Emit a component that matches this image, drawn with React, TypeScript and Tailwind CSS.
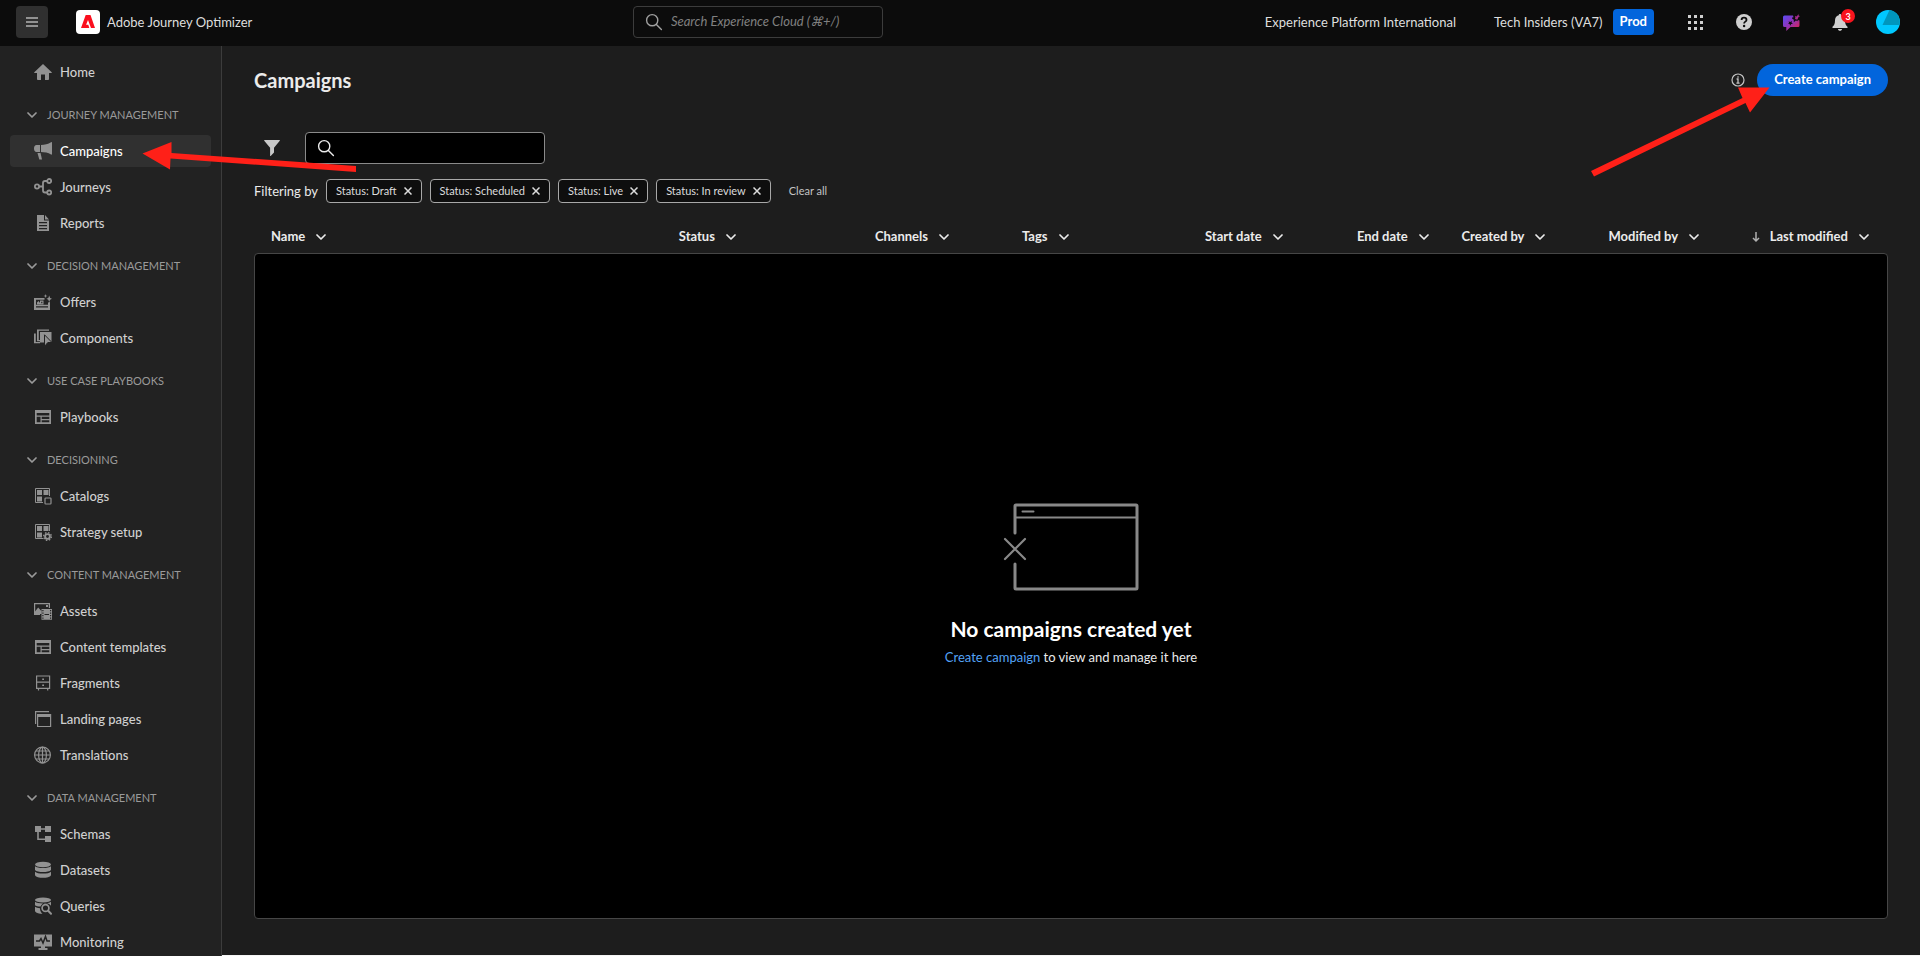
import type { ReactNode } from "react";

function Icon({ children, className = "size-[18px]" }: { children: ReactNode; className?: string }) {
  return (
    <svg viewBox="0 0 18 18" fill="currentColor" aria-hidden="true" className={`shrink-0 ${className}`}>
      {children}
    </svg>
  );
}

function Chevron() {
  return (
    <svg viewBox="0 0 10 10" fill="none" stroke="currentColor" strokeWidth="1.7" strokeLinecap="round" strokeLinejoin="round" aria-hidden="true" className="size-[10px] shrink-0">
      <path d="M1 3l4 4 4-4" />
    </svg>
  );
}

function SearchIcon() {
  return (
    <Icon>
      <g fill="none" stroke="currentColor" strokeWidth="1.4" strokeLinecap="round">
        <circle cx="7.2" cy="7.2" r="5.6" />
        <path d="M11.4 11.4l5 5" />
      </g>
    </Icon>
  );
}

const line = { fill: "none", stroke: "currentColor" };

const icons: Record<string, ReactNode> = {
  Home: <path d="M9 1L.3 9.2c-.3.4-.1.8.4.8H3v6c0 .6.3 1 .8 1H7v-5.500h4V17h3.200c.5 0 .8-.4.8-1v-6h2.300c.5 0 .7-.4.4-.8z" />,
  Campaigns: (
    <>
      <path d="M6 3v7H2.500C1 10 0 8.600 0 6.500S1 3 2.500 3zM7 3c3.600-.1 7.200-1 10-2.800.4-.3 1 0 1 .4v11.500c0 .5-.5.700-1 .4C14.200 10.700 10.600 10 7 10z" />
      <path d="M3.500 11h3l1.500 6.500H5.300z" />
    </>
  ),
  Journeys: (
    <g {...line} strokeWidth="1.8">
      <circle cx="3" cy="8.500" r="2.100" />
      <circle cx="15.200" cy="3" r="2" />
      <circle cx="15.200" cy="14.500" r="2" />
      <path d="M5 8.500h4M13.300 3H11Q9 3 9 5v7.500q0 2 2 2h2.300" />
    </g>
  ),
  Reports: (
    <path fillRule="evenodd" d="M3 1h7v5.500h5V17H3zM11 1l4 4.500h-4zM5 8v1.200h8V8zm0 3v1.200h8V11zm0 3v1.200h8V14z" />
  ),
  Offers: (
    <>
      <path fillRule="evenodd" d="M0 5h10.500v1.800H2v5h12V9.500L16 9v8H0zM2 13.300v1.200h12v-1.200z" />
      <path fillRule="evenodd" d="M3 11.500v-2L4.500 8l1.500 2V7.500h3.500v4zM7.200 8.700v1.600h1.200V8.700z" />
      <path d="M11.500 1l.5 1.600 1.500.4-1.500.5-.5 1.500-.5-1.500L9.500 3l1.500-.4zM15.200 2.500l.9 2.400 1.900.9-1.900.9-.9 2.300-.9-2.300-1.900-.9 1.900-.9z" />
    </>
  ),
  Components: (
    <>
      <path d="M0 4.500h1.800V13H6v1.200H0z" />
      <path d="M3 2V.500h12v1.200H4.800V11H7v1.200H3z" />
      <path d="M6 3h11.500v10.500H6z" />
      <path stroke="#222" strokeWidth="1" d="M10.500 5.800l7.500 7.700h-4.200L10.500 17.500z" />
    </>
  ),
  Playbooks: (
    <>
      <path fillRule="evenodd" d="M1 2h16v14H1zM2.700 5v9.300h12.600V5z" />
      <path d="M2 7.500h14v1.200H2zM6.500 8h1.200v7H6.500zM7 11h9v1.200H7z" />
    </>
  ),
  Catalogs: (
    <>
      <path d="M3 3h5v5H3zM9.500 3h5v5h-5zM3 9.500h5v5H3z" />
      <path {...line} d="M9 15.500H1.500v-14h14V9" />
      <rect {...line} strokeWidth="1.200" x="11" y="11" width="6" height="6" rx=".8" />
    </>
  ),
  "Strategy setup": (
    <>
      <path d="M3 3h5v5H3zM9.500 3h5v5h-5zM3 9.500h5v5H3z" />
      <path {...line} d="M9 15.500H1.500v-14h14V8" />
      <circle {...line} cx="13.500" cy="13.500" r="2.400" strokeWidth="1.900" />
      <circle {...line} cx="13.500" cy="13.500" r="3.900" strokeWidth="1.300" strokeDasharray="1.530 1.530" />
    </>
  ),
  Assets: (
    <>
      <path {...line} strokeWidth="1.200" d="M6 12.400H.600V1.600h14.800V6" />
      <path d="M1 9.500l3.200-4 3.300 3.700V12H1zM12 3h2v2h-2z" />
      <path fillRule="evenodd" d="M7.500 7H18v10.800H7.500zM8.300 8v1.300h1.200V8zm0 2.500v1.300h1.200v-1.300zm0 2.500v1.300h1.200V13zm0 2.500v1.300h1.200v-1.300zM16 8v1.300h1.200V8zm0 2.500v1.300h1.200v-1.300zm0 2.500v1.300h1.200V13zm0 2.500v1.300h1.200v-1.300zM10.500 12v1h4.500v-1z" />
    </>
  ),
  Fragments: (
    <>
      <path {...line} strokeWidth="1.200" d="M2.600 2h13v12.400h-13zM2.600 8.200h13M4.500 14.500v2M13.700 14.500v2" />
      <path d="M8.200 4.500h1.800v1.500H8.200zM8.200 10.500h1.800V12H8.200z" />
    </>
  ),
  "Landing pages": (
    <>
      <path d="M1 1h14v1.200H2.200V14H1zM4 4h13v3H4z" />
      <path {...line} strokeWidth="1.200" d="M3.600 4.500h13v12h-13z" />
    </>
  ),
  Translations: (
    <g {...line} strokeWidth="1.200">
      <circle cx="8.500" cy="9" r="7.900" />
      <ellipse cx="8.500" cy="9" rx="3.900" ry="7.900" />
      <path d="M8.500 1v16M.600 9h15.800M1.800 5h13.400M1.800 13h13.400" />
    </g>
  ),
  Schemas: (
    <>
      <path d="M1 1h6v6H1zM11 1h6v6h-6zM11 11h6v6h-6z" />
      <path {...line} strokeWidth="1.600" d="M6 4h6M4 6v8.200h8" />
    </>
  ),
  Datasets: (
    <>
      <ellipse cx="9" cy="3.500" rx="8" ry="2.800" />
      <path d="M1 5.200c2 2.400 14 2.400 16 0V9c-2 2.700-14 2.700-16 0zM1 10.700c2 2.500 14 2.500 16 0v3.500c-1.500 3.500-14.500 3.500-16 0z" />
    </>
  ),
  Queries: (
    <>
      <ellipse cx="9" cy="3" rx="8" ry="2.500" />
      <path d="M1 4.700C3 7 15 7 17 4.700v4C14 5 8.500 5 6.500 9.500 4 9.400 1.800 9 1 8.200zM1 9.800c1 .8 3 1.300 5 1.400 0 2.500 1 4.300 2.500 5.600-3 0-6.500-.6-7.500-2.500z" />
      <circle {...line} cx="11.500" cy="11" r="3.400" strokeWidth="1.700" />
      <path {...line} strokeWidth="2" strokeLinecap="round" d="M14.200 13.700l2.800 3" />
    </>
  ),
  Monitoring: (
    <>
      <path d="M0 1.500h18v12h-7V15h2.500v2h-9v-2H7v-1.500H0z" />
      <path fill="none" stroke="#222" strokeWidth="1.500" d="M2 8h3.500L7 5.500 9 10l2.500-6.500L13 8h3" />
    </>
  ),
};
icons["Content templates"] = icons.Playbooks;

const sections = [
  { title: "JOURNEY MANAGEMENT", items: ["Campaigns", "Journeys", "Reports"] },
  { title: "DECISION MANAGEMENT", items: ["Offers", "Components"] },
  { title: "USE CASE PLAYBOOKS", items: ["Playbooks"] },
  { title: "DECISIONING", items: ["Catalogs", "Strategy setup"] },
  { title: "CONTENT MANAGEMENT", items: ["Assets", "Content templates", "Fragments", "Landing pages", "Translations"] },
  { title: "DATA MANAGEMENT", items: ["Schemas", "Datasets", "Queries", "Monitoring"] },
];

function NavItem({ label }: { label: string }) {
  const active = label === "Campaigns";
  return (
    <a
      href="#"
      aria-current={active ? "page" : undefined}
      className={`flex h-8 items-center gap-2 rounded pl-6 text-[13px] font-medium ${active ? "bg-[#303030] text-white" : "text-[#d0d0d0]"}`}
    >
      <span className="flex text-[#929292]">
        <Icon>{icons[label]}</Icon>
      </span>
      <span className="pt-[2px]">{label}</span>
    </a>
  );
}

function Sidebar() {
  return (
    <nav aria-label="Main" className="w-[222px] shrink-0 overflow-hidden border-r border-[#3c3c3c] bg-[#222222] px-[10px] pt-[10px]">
      <NavItem label="Home" />
      {sections.map((s) => (
        <section key={s.title} className="mt-[11px] flex flex-col gap-1">
          <button type="button" aria-expanded="true" className="flex h-8 items-center gap-[10px] pl-[17px] text-[11px] text-[#9a9a9a]">
            <Chevron />
            {s.title}
          </button>
          {s.items.map((i) => (
            <NavItem key={i} label={i} />
          ))}
        </section>
      ))}
    </nav>
  );
}

function Header() {
  return (
    <header className="flex h-[46px] shrink-0 items-center bg-[#0c0c0c] pr-5 pb-[2px] pl-4 text-[13px] text-[#dedede]">
      <div className="flex flex-[37] items-center">
        <button type="button" aria-label="Menu" className="flex size-8 items-center justify-center rounded bg-[#303030] text-[#929292]">
          <svg viewBox="0 0 12 10" fill="currentColor" aria-hidden="true" className="h-[10px] w-3">
            <path d="M0 0h12v2H0zM0 4h12v2H0zM0 8h12v2H0z" />
          </svg>
        </button>
        <a href="#" className="ml-7 flex items-center gap-[7px]">
          <svg viewBox="0 0 24 24" aria-hidden="true" className="size-6">
            <rect width="24" height="24" rx="4" fill="#fff" />
            <path fill="#fa0f1e" d="M9.700 5h4.800L19 18h-4l-3-8-1.900 4.800h2.200L13.300 18H5z" />
          </svg>
          <span className="pt-[2px]">Adobe Journey Optimizer</span>
        </a>
      </div>
      <label className="flex h-8 w-[250px] items-center gap-2 rounded border border-[#3c3c3c] px-[11px] text-[#a0a0a0]">
        <SearchIcon />
        <input
          type="search"
          aria-label="Search Experience Cloud"
          placeholder="Search Experience Cloud (⌘+/)"
          className="min-w-0 flex-1 bg-transparent text-[13px] italic outline-none placeholder:text-[#808080]"
        />
      </label>
      <div className="flex flex-[61] items-center justify-end">
        <span className="mr-[38px] pt-[2px]">Experience Platform International</span>
        <span className="mr-[10px] pt-[2px]">Tech Insiders (VA7)</span>
        <span className="mr-[34px] flex h-[26px] items-center rounded bg-[#0265dc] px-[7px] font-bold text-white">Prod</span>
        <button type="button" aria-label="Apps" className="mr-[33px] text-[#cfcfcf]">
          <svg viewBox="0 0 15 15" fill="currentColor" aria-hidden="true" className="size-[15px]">
            <path d="M0 0h3v3H0zM6 0h3v3H6zM12 0h3v3h-3zM0 6h3v3H0zM6 6h3v3H6zM12 6h3v3h-3zM0 12h3v3H0zM6 12h3v3H6zM12 12h3v3h-3z" />
          </svg>
        </button>
        <button type="button" aria-label="Help" className="mr-[31px] text-[#cfcfcf]">
          <svg viewBox="0 0 16 16" aria-hidden="true" className="size-4">
            <circle cx="8" cy="8" r="8" fill="currentColor" />
            <path d="M5.600 6c0-1.600 1-2.300 2.400-2.300s2.500.8 2.500 2.200c0 1.700-2.400 1.800-2.400 3.600" fill="none" stroke="#0c0c0c" strokeWidth="1.800" />
            <circle cx="8.100" cy="12" r="1.200" fill="#0c0c0c" />
          </svg>
        </button>
        <button type="button" aria-label="AI Assistant" className="mr-8">
          <svg viewBox="0 0 17 17" aria-hidden="true" className="size-[17px]">
            <defs>
              <linearGradient id="assistant" x1="0" y1="0" x2="1" y2="1">
                <stop offset="0" stopColor="#5a4cf5" />
                <stop offset=".5" stopColor="#9332b4" />
                <stop offset="1" stopColor="#e8203f" />
              </linearGradient>
            </defs>
            <path fill="url(#assistant)" d="M1.500 1.500H10l1 3.500 5.500 1.500V11.500q0 1.500-1.500 1.500H7.500L3.300 17v-4H1.500Q0 13 0 11.500V3q0-1.500 1.500-1.500z" />
            <path fill="#0c0c0c" d="M5.500 7.500l1.900.6 1.500-1.200-.3 1.900 1.400 1.200-1.900.1-.8 1.700-.7-1.700L5 9.600l1.200-.9zM9.800 3l2.500.9 2.200-1.200-.7 2.300 1.400 2.200-2.400-.6-2 1.600V5.800L9 4.400z" />
            <path fill="#a52a8c" d="M12.200 1.800l1.500.6L15.500 0l.1 1.600 1.400.7-1.500.6-.6 1.700L14 6l-1-1-1.300.4.600-1.400z" />
          </svg>
        </button>
        <button type="button" aria-label="Notifications" className="relative mr-7 text-[#cfcfcf]">
          <svg viewBox="0 0 16 18" fill="currentColor" aria-hidden="true" className="h-[18px] w-4">
            <path d="M8 1c.8 0 1.200.4 1.300 1.200C12 3 13 5 13 7.500c0 3.500 1 4.800 2.500 6.200v1.300H.500v-1.300C2 12.300 3 11 3 7.500 3 5 4 3 6.700 2.200 6.800 1.400 7.200 1 8 1zM6 16h4c0 1-.8 1.800-2 1.800S6 17 6 16z" />
          </svg>
          <span className="absolute -top-[4px] left-[9px] flex size-[14px] items-center justify-center rounded-full bg-[#f8141e] text-[9px] leading-none font-bold text-white">3</span>
        </button>
        <button type="button" aria-label="Account">
          <svg viewBox="0 0 24 24" aria-hidden="true" className="size-6">
            <circle cx="12" cy="12" r="12" fill="#00c8ff" />
            <path fill="#0096bd" d="M13.500.1A12 12 0 0 1 23.500 15H6.500z" />
          </svg>
        </button>
      </div>
    </header>
  );
}

const columns = [
  { label: "Name", width: "w-[26%]" },
  { label: "Status", width: "w-[12%]" },
  { label: "Channels", width: "w-[9%]" },
  { label: "Tags", width: "w-[11.2%]" },
  { label: "Start date", width: "w-[9.3%]" },
  { label: "End date", width: "w-[6.4%]" },
  { label: "Created by", width: "w-[9%]" },
  { label: "Modified by", width: "w-[8.7%]" },
  { label: "Last modified", width: "w-[8.4%]" },
];

const filters = ["Status: Draft", "Status: Scheduled", "Status: Live", "Status: In review"];

function CampaignTable() {
  return (
    <table className="w-full table-fixed border-separate border-spacing-0">
      <thead>
        <tr>
          {columns.map((c, i) => (
            <th key={c.label} scope="col" aria-sort={i === 8 ? "descending" : undefined} className={`h-[35px] p-0 pt-[2px] text-left ${i === 0 ? "pl-[17px]" : ""} ${c.width}`}>
              <button type="button" className="flex items-center gap-[11px] text-[13px] font-bold whitespace-nowrap text-[#ebebeb]">
                <span className="flex items-center gap-[9px]">
                  {i === 8 && (
                    <svg viewBox="0 0 10 12" fill="none" stroke="#b0b0b0" strokeWidth="1.500" aria-hidden="true" className="h-3 w-[10px]">
                      <path d="M5 1v9M2 7l3 3 3-3" />
                    </svg>
                  )}
                  {c.label}
                </span>
                <Chevron />
              </button>
            </th>
          ))}
        </tr>
      </thead>
      <tbody>
        <tr>
          <td colSpan={9} className="h-[calc(100vh-290px)] rounded border border-[#464646] bg-black p-0 text-center">
            <div className="flex flex-col items-center pb-[2px]">
              <svg viewBox="0 0 136 88" fill="none" stroke="#888" strokeLinecap="round" aria-hidden="true" className="h-[88px] w-[136px]">
                <path strokeWidth="3" strokeLinejoin="round" d="M12 30V3q0-1 1-1h120q1 0 1 1v82q0 1-1 1H13q-1 0-1-1V61" />
                <path strokeWidth="2" d="M12 14.500h121M19.500 8.500h11" />
                <path strokeWidth="2.200" d="M2 36l20 20M22 36L2 56" />
              </svg>
              <h2 className="mt-6 text-[21px] leading-7 font-bold text-white">No campaigns created yet</h2>
              <p className="mt-1 text-[13px] leading-5 text-[#ebebeb]">
                <a href="#" className="text-[#54a3f6]">Create campaign</a> to view and manage it here
              </p>
            </div>
          </td>
        </tr>
      </tbody>
    </table>
  );
}

export default function App() {
  return (
    <div className="relative flex h-screen flex-col overflow-hidden bg-[#1d1d1d] font-['Lato','Noto_Sans',sans-serif]">
      <Header />
      <div className="flex min-h-0 flex-1">
        <Sidebar />
        <main className="min-w-0 flex-1 border-b border-[#f5f5f5] px-8">
          <div className="flex h-[67px] items-center justify-between">
            <h1 className="text-[20px] leading-6 font-bold text-[#ebebeb]">Campaigns</h1>
            <div className="flex items-center gap-3">
              <button type="button" aria-label="About campaigns" className="text-[#c4c4c4]">
                <svg viewBox="0 0 14 14" fill="none" stroke="currentColor" strokeWidth="1.200" aria-hidden="true" className="size-[14px]">
                  <circle cx="7" cy="7" r="6" />
                  <path strokeWidth="1.300" d="M5.600 6H7v4M5.400 10.100h3.200M7 3.300v1.400" />
                </svg>
              </button>
              <button type="button" className="h-8 rounded-full bg-[#0265dc] px-[17px] text-[13px] font-bold text-white">Create campaign</button>
            </div>
          </div>
          <div className="mt-[19px] flex items-center gap-[25px] pl-[10px]">
            <button type="button" aria-label="Filter" className="text-[#c8c8c8]">
              <svg viewBox="0 0 16 16" fill="currentColor" aria-hidden="true" className="size-4">
                <path d="M.500 0h15q.6.200.3.700L10 7.800v4.600L6.700 16q-.5.300-.6-.3V7.800L.200.700Q0 .200.500 0z" />
              </svg>
            </button>
            <label className="flex h-8 w-60 items-center rounded border border-[#8a8a8a] bg-black px-[11px] text-[#ebebeb]">
              <SearchIcon />
              <input type="search" aria-label="Search campaigns" className="ml-2 min-w-0 flex-1 bg-transparent text-[13px] outline-none" />
            </label>
          </div>
          <div className="mt-[15px] flex items-center gap-2">
            <span className="pt-px text-[13px] text-[#ebebeb]">Filtering by</span>
            {filters.map((f) => (
              <span key={f} className="flex h-6 items-center gap-[7px] rounded border border-[#a8a8a8] bg-[#0e0e0e] px-[9px] text-[11px] text-[#dcdcdc]">
                {f}
                <button type="button" aria-label={`Remove ${f}`}>
                  <svg viewBox="0 0 8 8" stroke="currentColor" strokeWidth="1.500" aria-hidden="true" className="size-2">
                    <path d="M.5.5l7 7M7.500.5l-7 7" />
                  </svg>
                </button>
              </span>
            ))}
            <button type="button" className="ml-[10px] pt-px text-[11px] text-[#c4c4c4]">Clear all</button>
          </div>
          <div className="mt-[15px]">
            <CampaignTable />
          </div>
        </main>
      </div>
      <svg viewBox="0 0 214 52" fill="#ff2018" aria-hidden="true" className="pointer-events-none absolute top-[138px] left-[142px] h-[52px] w-[214px]">
        <path d="M.500 15.500L29.500 4v11L214 28v6L28.500 20.500l-.500 11z" />
      </svg>
      <svg viewBox="0 0 180 92" fill="#ff2018" aria-hidden="true" className="pointer-events-none absolute top-[86px] right-[150px] h-[92px] w-[180px]">
        <path d="M179.500 1.500H148l4.500 10.500L1 85l3 5.500L155.500 17l4.500 9.500z" />
      </svg>
    </div>
  );
}
